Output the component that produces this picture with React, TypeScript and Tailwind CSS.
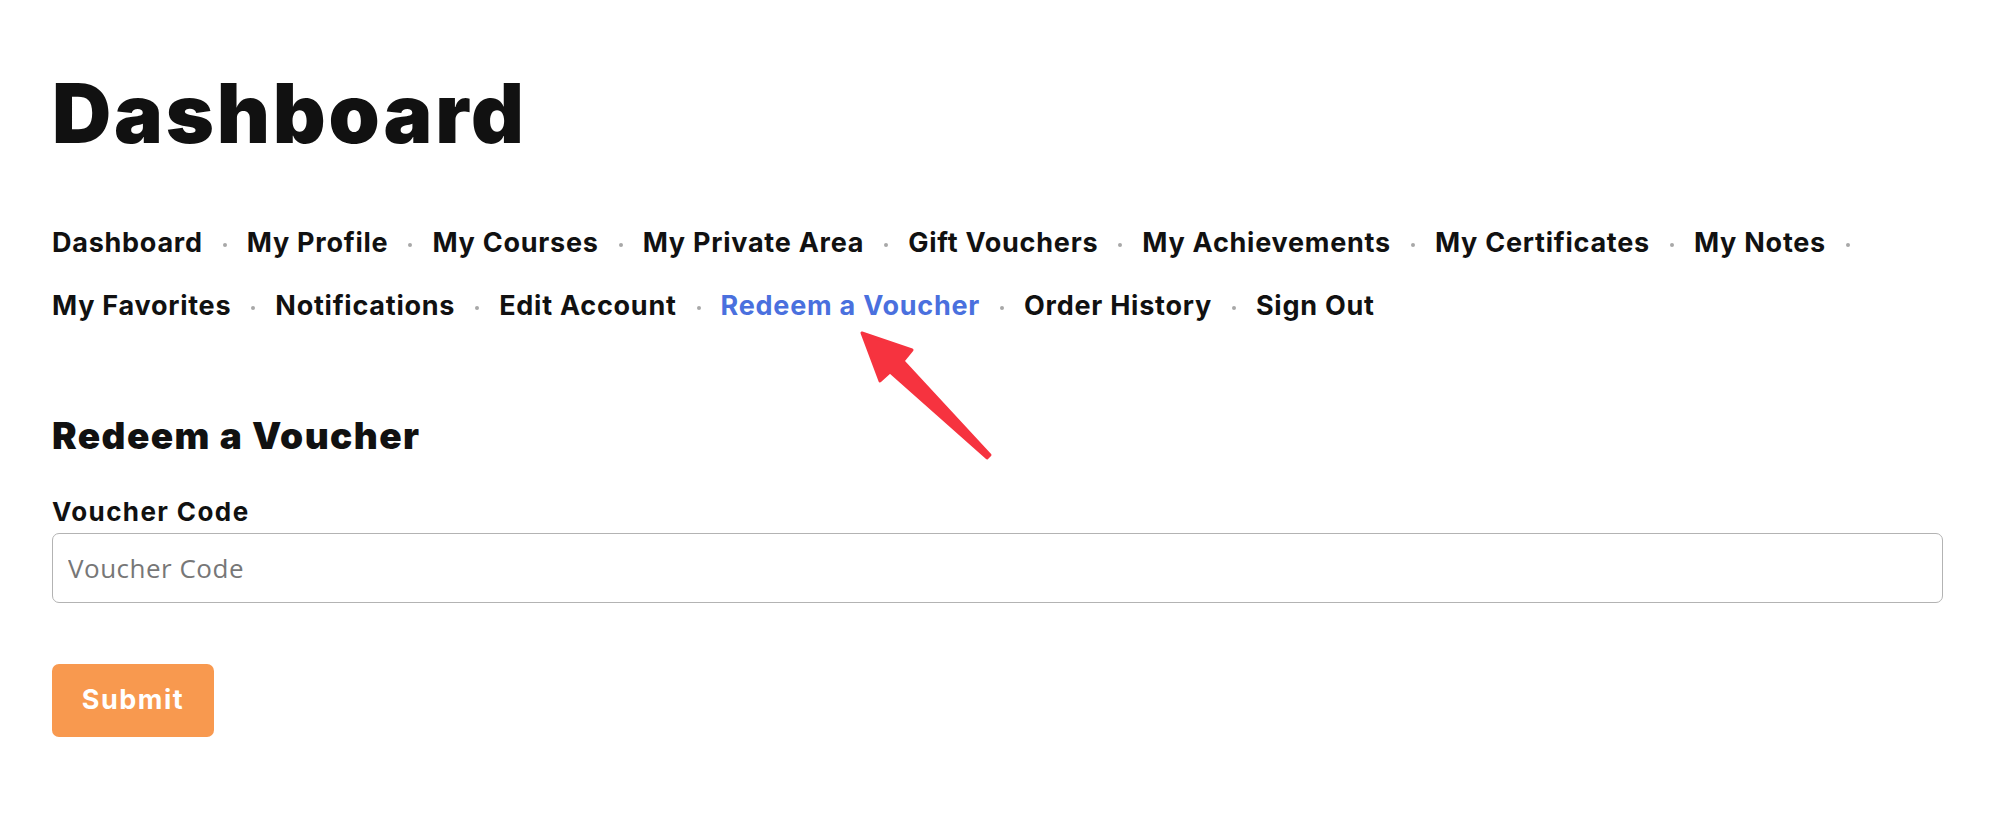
import React from "react";

const row1 = ["Dashboard", "My Profile", "My Courses", "My Private Area", "Gift Vouchers", "My Achievements", "My Certificates", "My Notes"];
const row2 = ["My Favorites", "Notifications", "Edit Account", "Redeem a Voucher", "Order History", "Sign Out"];

function NavRow({ items, trailingDot }: { items: string[]; trailingDot?: boolean }) {
  return (
    <div className="flex items-center gap-5 h-[63px]">
      {items.map((label, i) => (
        <React.Fragment key={label}>
          <a
            href="#"
            className={
              label === "Redeem a Voucher"
                ? "text-[27px] font-bold tracking-[0.75px] text-[#4a70de] whitespace-nowrap"
                : "text-[27px] font-bold tracking-[0.75px] text-[#111111] whitespace-nowrap"
            }
          >
            {label}
          </a>
          {(i < items.length - 1 || trailingDot) && (
            <span className="w-1 h-1 rounded-full bg-[#a8a8a8] translate-y-[1px]" />
          )}
        </React.Fragment>
      ))}
    </div>
  );
}

export default function App() {
  return (
    <div className="relative min-h-[822px] w-full bg-white font-['Inter',sans-serif] text-[#111111]">
      <div className="pl-[52px] pr-[56px] pt-[73px]">
        <h1 className="text-[82px] leading-[82px] font-black tracking-[2.8px]">Dashboard</h1>
        <nav className="mt-[57px] flex flex-col">
          <NavRow items={row1} trailingDot />
          <NavRow items={row2} />
        </nav>
        <h2 className="mt-[80px] text-[37px] leading-[36px] font-black tracking-[1.4px]">Redeem a Voucher</h2>
        <form className="mt-[45px] flex flex-col" onSubmit={(e) => e.preventDefault()}>
          <label className="text-[26px] leading-[25px] font-bold tracking-[1.4px]">Voucher Code</label>
          <input
            type="text"
            placeholder="Voucher Code"
            className="mt-[9px] h-[70px] w-full rounded-[7px] border-[1.5px] border-[#b3b3b3] px-[15px] font-['Open_Sans',sans-serif] text-[26px] tracking-[0.5px] text-[#333] placeholder:text-[#777777] outline-none"
          />
          <button
            type="submit"
            className="mt-[61px] h-[73px] w-[162px] rounded-[7px] bg-[#f8994f] text-[27px] font-bold tracking-[1.5px] text-white"
          >
            Submit
          </button>
        </form>
      </div>
      <svg
        className="pointer-events-none absolute left-0 top-0"
        width="1999"
        height="822"
        viewBox="0 0 1999 822"
      >
        <path
          d="M862 333 L912 350 L903 361 L990 455 L987 458 L890 372 L880 381 Z"
          fill="#f6333f"
          stroke="#f6333f"
          strokeWidth="3"
          strokeLinejoin="round"
        />
      </svg>
    </div>
  );
}
